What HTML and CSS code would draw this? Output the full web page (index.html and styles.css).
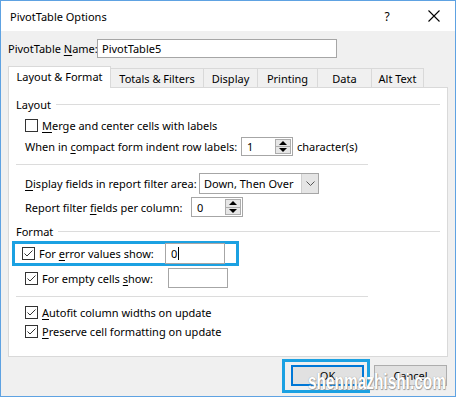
FILE: index.html
```html
<!DOCTYPE html>
<html lang="en">
<head>
<meta charset="utf-8"/>
<title>PivotTable Options</title>
<link rel="stylesheet" href="styles.css">
</head>
<body>
<div class="window">
  <div class="titlebar">
    <span class="title">PivotTable Options</span>
    <span class="help">?</span>
    <svg class="close" width="12" height="12" viewBox="0 0 12 12"><path d="M0.5 0.5L11.5 11.5M11.5 0.5L0.5 11.5" stroke="#000" stroke-width="1.1" fill="none"/></svg>
  </div>
  <div class="content">
    <div class="name-row">
      <span class="name-label">PivotTable <u>N</u>ame:</span>
      <div class="textbox name-box">PivotTable5</div>
    </div>

    <div class="tabs">
      <div class="tab active t1">Layout &amp; Format</div>
      <div class="tab t2">Totals &amp; Filters</div>
      <div class="tab t3">Display</div>
      <div class="tab t4">Printing</div>
      <div class="tab t5">Data</div>
      <div class="tab t6">Alt Text</div>
    </div>

    <div class="panel">
      <div class="group-head"><span>Layout</span><span class="rule"></span></div>
      <div class="row r-merge">
        <span class="check"></span>
        <span class="cb-text"><u>M</u>erge and center cells with labels</span>
      </div>
      <div class="row r-compact">
        <span class="lbl lbl-compact">When in <u>c</u>ompact form indent row labels:</span>
        <div class="textbox spin"><span class="val">1</span><span class="spin-btns"><span class="up"></span><span class="down"></span></span></div>
        <span class="after">character(s)</span>
      </div>
      <div class="sep"></div>
      <div class="row r-display">
        <span class="lbl lbl-display"><u>D</u>isplay fields in report filter area:</span>
        <div class="dropdown"><span class="val">Down, Then Over</span><span class="drop-btn"><svg width="9" height="5" viewBox="0 0 9 5"><path d="M0.5 0.5L4.5 4.5L8.5 0.5" stroke="#555" fill="none"/></svg></span></div>
      </div>
      <div class="row r-report">
        <span class="lbl lbl-report">Report filter <u>f</u>ields per column:</span>
        <div class="textbox spin spin-report"><span class="val">0</span><span class="spin-btns"><span class="up"></span><span class="down"></span></span></div>
      </div>
      <div class="group-head format-head"><span>Format</span><span class="rule"></span></div>
      <div class="focus-box">
        <div class="row r-error">
          <span class="check checked"><svg width="11" height="11" viewBox="0 0 11 11"><path d="M1.5 5.5L4 8L9.5 2.5" stroke="#333" stroke-width="1" fill="none"/></svg></span>
          <span class="cb-text lbl-value">For <u>e</u>rror values show:</span>
          <div class="textbox value-box">0<span class="caret"></span></div>
        </div>
      </div>
      <div class="row r-empty">
        <span class="check checked"><svg width="11" height="11" viewBox="0 0 11 11"><path d="M1.5 5.5L4 8L9.5 2.5" stroke="#333" stroke-width="1" fill="none"/></svg></span>
        <span class="cb-text lbl-value">For empty cells <u>s</u>how:</span>
        <div class="textbox value-box empty-box"></div>
      </div>
      <div class="sep sep-format"></div>
      <div class="row r-small">
        <span class="check checked"><svg width="11" height="11" viewBox="0 0 11 11"><path d="M1.5 5.5L4 8L9.5 2.5" stroke="#333" stroke-width="1" fill="none"/></svg></span>
        <span class="cb-text"><u>A</u>utofit column widths on update</span>
      </div>
      <div class="row r-small">
        <span class="check checked"><svg width="11" height="11" viewBox="0 0 11 11"><path d="M1.5 5.5L4 8L9.5 2.5" stroke="#333" stroke-width="1" fill="none"/></svg></span>
        <span class="cb-text"><u>P</u>reserve cell formatting on update</span>
      </div>
    </div>

    <div class="buttons">
      <div class="focus-ring"><div class="btn ok">OK</div></div>
      <div class="btn cancel">Cancel</div>
      <span class="watermark">shenmazhishi.com</span>
    </div>
  </div>
</div>
</body>
</html>
```

FILE: styles.css
```css
body {
  margin: 0;
  font-family: "Segoe UI", "Noto Sans", sans-serif;
  font-size: 11px;
  color: #000;
  white-space: nowrap;
}
u {
  text-decoration-thickness: 1px;
  text-underline-offset: 2px;
}

.window {
  width: 456px;
  height: 397px;
  box-sizing: border-box;
  border: 1px solid #5ea2e2;
  background: #f0f0f0;
  display: flex;
  flex-direction: column;
}

/* title bar */
.titlebar {
  height: 30px;
  flex: none;
  background: #fff;
  display: flex;
  align-items: center;
  padding: 0 15px 0 9px;
}
.title {
  flex: 1;
  font-size: 11px;
}
.help {
  width: 10px;
  text-align: center;
  font-size: 12px;
  margin-right: 36px;
}
.close {
  display: block;
}

.content {
  flex: 1;
  padding: 8px 7px 0;
  display: flex;
  flex-direction: column;
}

.textbox {
  box-sizing: border-box;
  background: #fff;
  border: 1px solid #a6a6a6;
  display: flex;
  align-items: center;
  padding-left: 4px;
  flex: none;
}

.name-row {
  display: flex;
  align-items: center;
  height: 19px;
}
.name-label {
  width: 89px;
  flex: none;
}
.name-box {
  width: 240px;
  height: 19px;
}

/* tabs */
.tabs {
  display: flex;
  align-items: flex-end;
  height: 22px;
  margin-top: 8px;
}
.tab {
  box-sizing: border-box;
  height: 20px;
  border-top: 1px solid #d9d9d9;
  border-right: 1px solid #d9d9d9;
  display: flex;
  align-items: center;
  justify-content: center;
  padding-bottom: 1px;
}
.tab.active {
  height: 22px;
  background: #fff;
  border-left: 1px solid #d9d9d9;
  position: relative;
  z-index: 1;
  padding-bottom: 3px;
}
.t1 { width: 103px; }
.t2 { width: 93px; }
.t3 { width: 54px; }
.t4 { width: 60px; }
.t5 { width: 54px; }
.t6 { width: 52px; }

.panel {
  box-sizing: border-box;
  height: 270px;
  margin-top: -1px;
  background: #fff;
  border: 1px solid #d9d9d9;
  padding: 6px 7px 0;
  display: flex;
  flex-direction: column;
}

.group-head {
  display: flex;
  align-items: center;
  gap: 5px;
  height: 20px;
}
.group-head .rule {
  flex: 1;
  height: 1px;
  background: #dcdcdc;
}
.format-head {
  height: 19px;
  margin-top: 4px;
}

.row {
  display: flex;
  align-items: center;
  padding-left: 9px;
}
.r-merge { height: 22px; }
.r-compact { height: 21px; }
.r-display { height: 22px; }
.r-report { height: 22px; margin-top: 2px; }
.r-error { height: 25px; }
.r-empty { height: 20px; margin-top: 2px; }
.r-small { height: 19px; }

.check {
  box-sizing: border-box;
  width: 13px;
  height: 13px;
  flex: none;
  border: 1px solid #333;
  background: #fff;
  display: flex;
}
.cb-text {
  margin-left: 4px;
}

.lbl, .lbl-value {
  flex: none;
}
.lbl-compact { width: 216px; }
.lbl-display { width: 174px; }
.lbl-report { width: 166px; }
.lbl-value { width: 126px; }

.spin {
  width: 52px;
  height: 19px;
  padding-left: 5px;
  justify-content: space-between;
}
.spin-report {
  height: 20px;
}
.spin-btns {
  box-sizing: border-box;
  width: 16px;
  height: calc(100% - 2px);
  margin-right: 1px;
  border: 1px solid #acacac;
  background: #e6e6e6;
  display: flex;
  flex-direction: column;
}
.spin-btns span {
  flex: 1;
  display: flex;
  align-items: center;
  justify-content: center;
}
.spin-btns .up {
  border-bottom: 1px solid #acacac;
}
.spin-btns .up::before {
  content: "";
  border-left: 4px solid transparent;
  border-right: 4px solid transparent;
  border-bottom: 4px solid #000;
}
.spin-btns .down::before {
  content: "";
  border-left: 4px solid transparent;
  border-right: 4px solid transparent;
  border-top: 4px solid #000;
}
.after {
  margin-left: 4px;
}

.dropdown {
  box-sizing: border-box;
  width: 120px;
  height: 21px;
  flex: none;
  border: 1px solid #a6a6a6;
  background: #fff;
  display: flex;
  align-items: center;
  justify-content: space-between;
  padding-left: 4px;
}
.drop-btn {
  box-sizing: border-box;
  width: 17px;
  height: 100%;
  background: #e5e5e5;
  border-left: 1px solid #cfcfcf;
  display: flex;
  align-items: center;
  justify-content: center;
}

.sep {
  width: 352px;
  height: 1px;
  background: #dcdcdc;
  margin: 7px 0;
}
.sep-format {
  margin: 8px 0 6px;
}

.focus-box {
  box-sizing: border-box;
  width: 227px;
  height: 25px;
  margin: 0 0 0 -4px;
  border: 3px solid #1ba1e2;
  display: flex;
  align-items: center;
}
.focus-box .row {
  padding-left: 7px;
  height: 19px;
}
.value-box {
  width: 60px;
  height: 21px;
  padding-left: 5px;
}
.empty-box {
  height: 20px;
}
.caret {
  width: 1px;
  height: 13px;
  background: #000;
  margin-left: 1px;
}

/* dialog buttons */
.buttons {
  position: relative;
  display: flex;
  justify-content: flex-end;
  align-items: flex-start;
  margin-top: 2px;
  padding-right: 1px;
}
.focus-ring {
  box-sizing: border-box;
  width: 88px;
  height: 34px;
  border: 3px solid #1ba1e2;
  padding: 3px 3px 0 6px;
  margin-right: 4px;
}
.btn {
  box-sizing: border-box;
  width: 73px;
  height: 21px;
  background: #e1e1e1;
  border: 1px solid #adadad;
  display: flex;
  align-items: center;
  justify-content: center;
}
.cancel {
  margin-top: 6px;
}
.ok {
  border: 2px solid #0078d7;
}
.watermark {
  position: absolute;
  right: 2px;
  top: 10px;
  font-family: "Liberation Sans", Arial, sans-serif;
  font-weight: bold;
  font-size: 22px;
  color: #fff;
  text-shadow: 0 0 1px #8a8a8a, 1px 1px 1px #9a9a9a;
  transform: scaleX(0.7);
  transform-origin: right top;
}
```
